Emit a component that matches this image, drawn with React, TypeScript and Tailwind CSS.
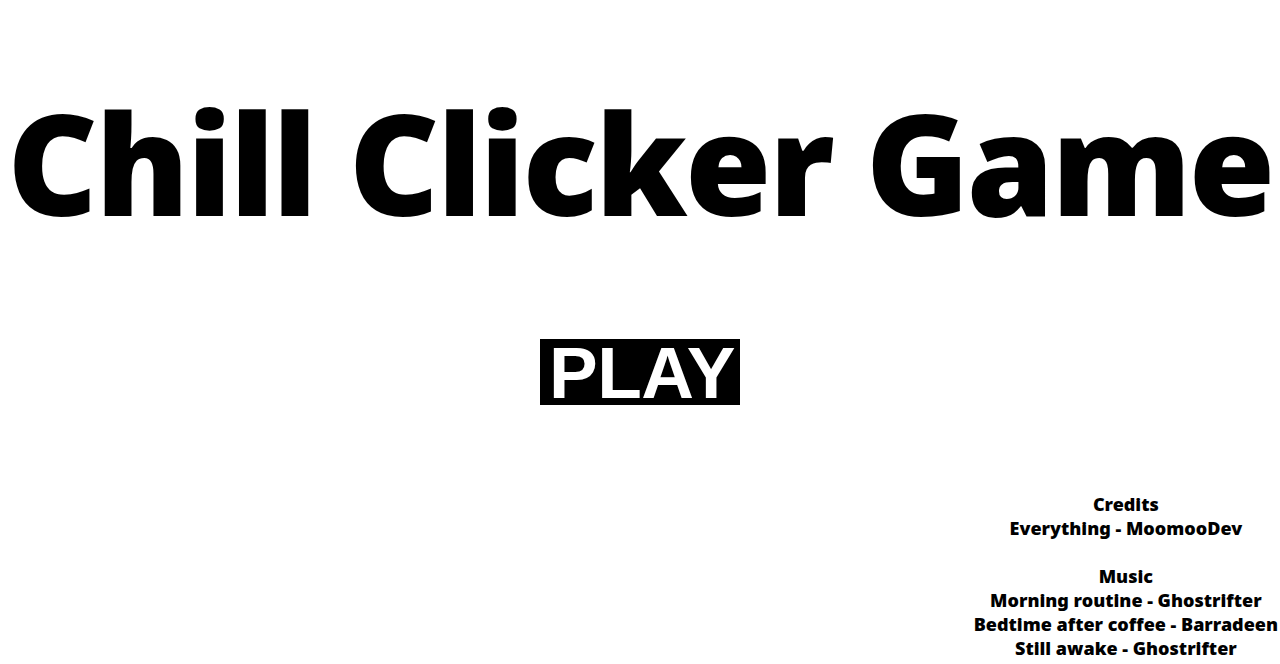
import React from 'react';

const credits = [
  'Credits',
  'Everything - MoomooDev',
  '',
  'Music',
  'Morning routine - Ghostrifter',
  'Bedtime after coffee - Barradeen',
  'Still awake - Ghostrifter',
];

const App: React.FC = () => {
  return (
    <div className="h-[664px] w-full bg-white text-black flex flex-col overflow-hidden">
      <h1
        className="text-center text-[140px] leading-none font-black tracking-[-2.6px] mt-[92px] whitespace-nowrap"
        style={{ fontFamily: '"Noto Sans", "Open Sans", sans-serif' }}
      >
        Chill Clicker Game
      </h1>

      <div className="flex justify-center mt-[107px]">
        <button
          className="bg-black text-white h-[66px] w-[200px] flex items-center justify-center pl-[4px] text-[73px] leading-none font-bold tracking-[-0.5px]"
          style={{ fontFamily: '"Liberation Sans", Arial, sans-serif' }}
        >
          PLAY
        </button>
      </div>

      <div
        className="self-end mt-auto mb-[4px] mr-[2px] text-center text-[18px] leading-[24px] font-black"
        style={{ fontFamily: '"Noto Sans", "Open Sans", sans-serif' }}
      >
        {credits.map((line, i) => (
          <div key={i} className="h-[24px] whitespace-nowrap">
            {line}
          </div>
        ))}
      </div>
    </div>
  );
};

export default App;
